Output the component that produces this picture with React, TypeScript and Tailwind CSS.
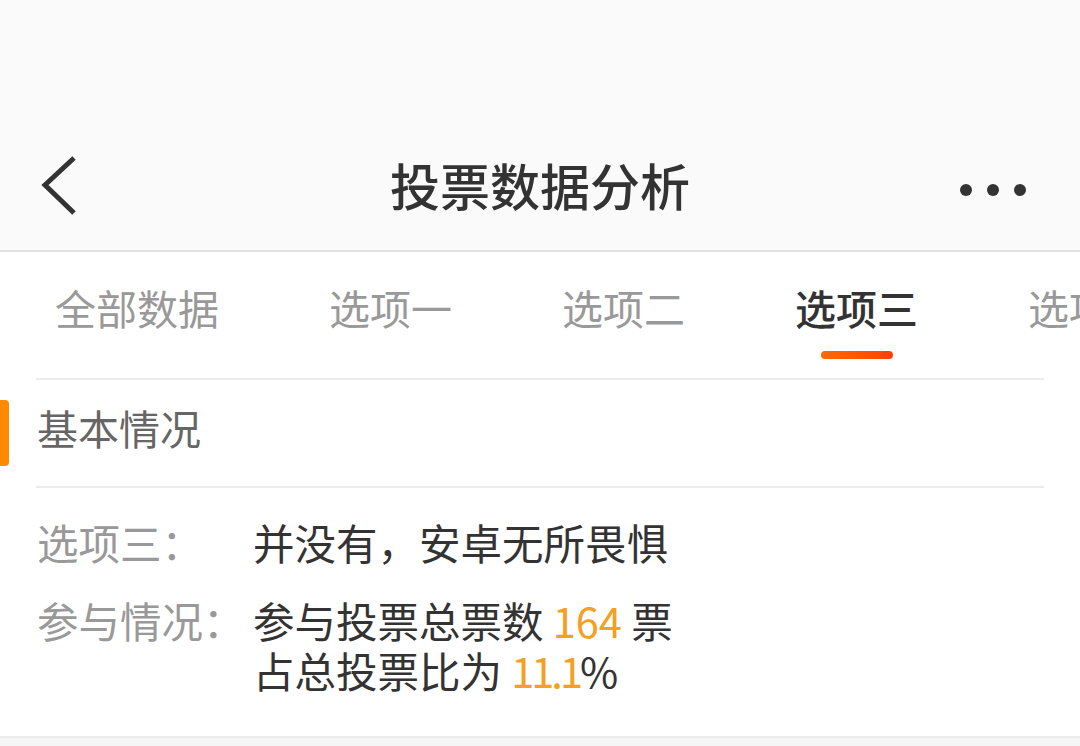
const FONT = { fontFamily: '"Noto Sans CJK SC", "Noto Sans", sans-serif' };

const tabs = ["全部数据", "选项一", "选项二", "选项三", "选项四"];

function BackIcon() {
  return (
    <svg width="40" height="62" viewBox="0 0 40 62" fill="none">
      <polyline points="34,3 5,30 34,58" stroke="#333" strokeWidth="5" strokeLinejoin="miter" />
    </svg>
  );
}

function Header() {
  return (
    <div className="bg-[#fafafa] border-b-2 border-[#e0e0e0]">
      <div className="h-[130px]" />
      <div className="relative flex h-[120px] items-center justify-between pl-[40px] pr-[54px]">
        <div className="-mt-[8px]">
          <BackIcon />
        </div>
        <h1 className="absolute left-1/2 top-[29px] -translate-x-1/2 text-[50px] leading-[50px] font-medium text-[#333]">
          投票数据分析
        </h1>
        <div className="flex items-center gap-[15px]">
          <span className="h-[12px] w-[12px] rounded-full bg-[#333]" />
          <span className="h-[12px] w-[12px] rounded-full bg-[#333]" />
          <span className="h-[12px] w-[12px] rounded-full bg-[#333]" />
        </div>
      </div>
    </div>
  );
}

function Tabs({ active }: { active: number }) {
  return (
    <div className="flex h-[126px] overflow-hidden whitespace-nowrap">
      {tabs.map((t, i) => (
        <div key={t} className="relative flex shrink-0 flex-col items-center px-[55px] pt-[26px]">
          <span
            className={
              i === active
                ? "text-[41px] leading-[58px] font-medium text-[#333]"
                : "text-[41px] leading-[58px] text-[#999]"
            }
          >
            {t}
          </span>
          {i === active && (
            <span className="mt-[15px] h-[8px] w-[72px] rounded-full bg-gradient-to-r from-[#ff6a00] to-[#ff4000]" />
          )}
        </div>
      ))}
    </div>
  );
}

export default function App() {
  return (
    <div className="h-[746px] w-[1080px] overflow-hidden bg-[#f5f5f5]" style={FONT}>
      <Header />
      <div className="bg-white">
        <Tabs active={3} />
        <div className="mx-[36px] h-[2px] bg-[#ececec]" />
        <div className="relative flex h-[106px] items-center px-[37px] pb-[10px]">
          <span className="absolute left-0 top-[20px] h-[66px] w-[9px] rounded-r-[4px] bg-[#ff8a00]" />
          <span className="text-[41px] text-[#666]">基本情况</span>
        </div>
        <div className="mx-[36px] h-[2px] bg-[#ececec]" />
        <div className="flex flex-col gap-[28px] px-[37px] pt-[29px] pb-[41px] text-[41.5px] leading-[50px]">
          <div className="flex">
            <span className="w-[216px] shrink-0 text-[#999]">选项三：</span>
            <span className="text-[#333]">并没有，安卓无所畏惧</span>
          </div>
          <div className="flex">
            <span className="w-[216px] shrink-0 text-[#999]">参与情况：</span>
            <div className="flex flex-col text-[#333]">
              <span>
                参与投票总票数 <span className="text-[#f5a023]">164</span> 票
              </span>
              <span>
                占总投票比为 <span className="tracking-[-3px] text-[#f5a023]">11.1</span>%
              </span>
            </div>
          </div>
        </div>
      </div>
      <div className="h-[2px] bg-[#ececec]" />
    </div>
  );
}
